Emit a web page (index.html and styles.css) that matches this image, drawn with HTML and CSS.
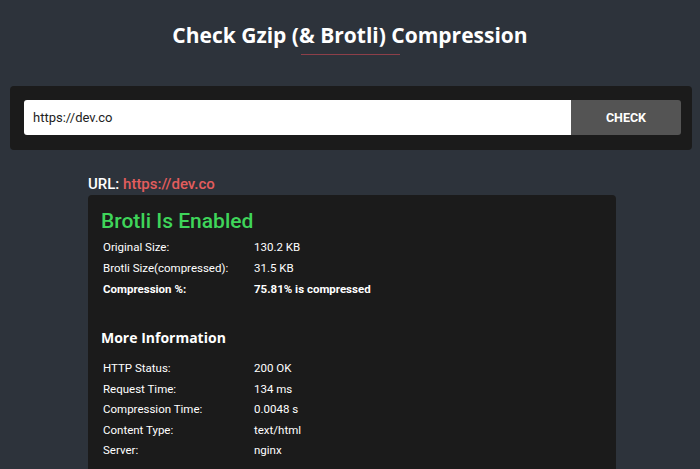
FILE: index.html
```html
<!DOCTYPE html>
<html lang="en">
<head>
  <meta charset="UTF-8" />
  <title>Check Gzip (&amp; Brotli) Compression</title>
  <link rel="stylesheet" href="styles.css">
</head>
<body>
  <header class="page-head">
    <h1>Check Gzip (&amp; Brotli) Compression</h1>
    <span class="rule"></span>
  </header>

  <form class="search" onsubmit="return false">
    <input type="text" class="search-input" value="https://dev.co">
    <button type="submit" class="search-btn">CHECK</button>
  </form>

  <section class="result">
    <div class="url-line">URL: <a href="#">https://dev.co</a></div>
    <div class="card">
      <h2 class="status">Brotli Is Enabled</h2>
      <table class="info">
        <tr><td>Original Size:</td><td>130.2 KB</td></tr>
        <tr><td>Brotli Size(compressed):</td><td>31.5 KB</td></tr>
        <tr class="strong"><td>Compression %:</td><td>75.81% is compressed</td></tr>
      </table>

      <h3 class="more">More Information</h3>
      <table class="info">
        <tr><td>HTTP Status:</td><td>200 OK</td></tr>
        <tr><td>Request Time:</td><td>134 ms</td></tr>
        <tr><td>Compression Time:</td><td>0.0048 s</td></tr>
        <tr><td>Content Type:</td><td>text/html</td></tr>
        <tr><td>Server:</td><td>nginx</td></tr>
      </table>
    </div>
  </section>
</body>
</html>
```

FILE: styles.css
```css
body {
  margin: 0;
  background-color: #2d333b;
  color: #fff;
  font-family: Roboto, "Liberation Sans", sans-serif;
}

.page-head {
  display: flex;
  flex-direction: column;
  align-items: center;
  padding-top: 20px;
}

.page-head h1 {
  margin: 0;
  font-family: "Open Sans", sans-serif;
  font-size: 21px;
  font-weight: 700;
  line-height: 30px;
}

.rule {
  display: block;
  width: 99px;
  height: 1px;
  margin-top: 4px;
  background-color: #8d3f49;
}

.search {
  display: flex;
  margin: 31px 8px 0 10px;
  padding: 14px 11px 15px 14px;
  background-color: #1b1b1b;
  border-radius: 4px;
}

.search-input {
  flex: 1;
  height: 35px;
  box-sizing: border-box;
  padding: 0 9px;
  border: none;
  border-radius: 3px 0 0 3px;
  font-family: Roboto, sans-serif;
  font-size: 13px;
  color: #222;
  background: #fff;
  outline: none;
}

.search-btn {
  width: 110px;
  height: 35px;
  border: none;
  border-radius: 0 3px 3px 0;
  background-color: #545454;
  color: #fff;
  font-family: Roboto, sans-serif;
  font-size: 12.5px;
  font-weight: 700;
  cursor: pointer;
}

.result {
  width: 528px;
  margin: 25px 0 0 88px;
}

.url-line {
  font-size: 15px;
  font-weight: 500;
  line-height: 18px;
  margin-bottom: 2px;
}

.url-line a {
  color: #e35d5d;
  text-decoration: none;
}

.card {
  background-color: #1b1b1b;
  border-radius: 4px;
  padding: 13px 13px 20px;
  min-height: 300px;
}

.status {
  margin: 0 0 2px;
  font-size: 21px;
  font-weight: 500;
  line-height: 26px;
  color: #3fd55a;
}

.info {
  border-collapse: collapse;
  font-size: 11.5px;
}

.info td {
  height: 21px;
  padding: 0 2px;
}

.info td:first-child {
  width: 147px;
}

.info .strong td {
  font-weight: 700;
}

.more {
  margin: 29px 0 10px;
  font-family: "Open Sans", sans-serif;
  font-size: 14px;
  font-weight: 700;
  line-height: 20px;
}

.more + .info td {
  height: 20.5px;
}
```
